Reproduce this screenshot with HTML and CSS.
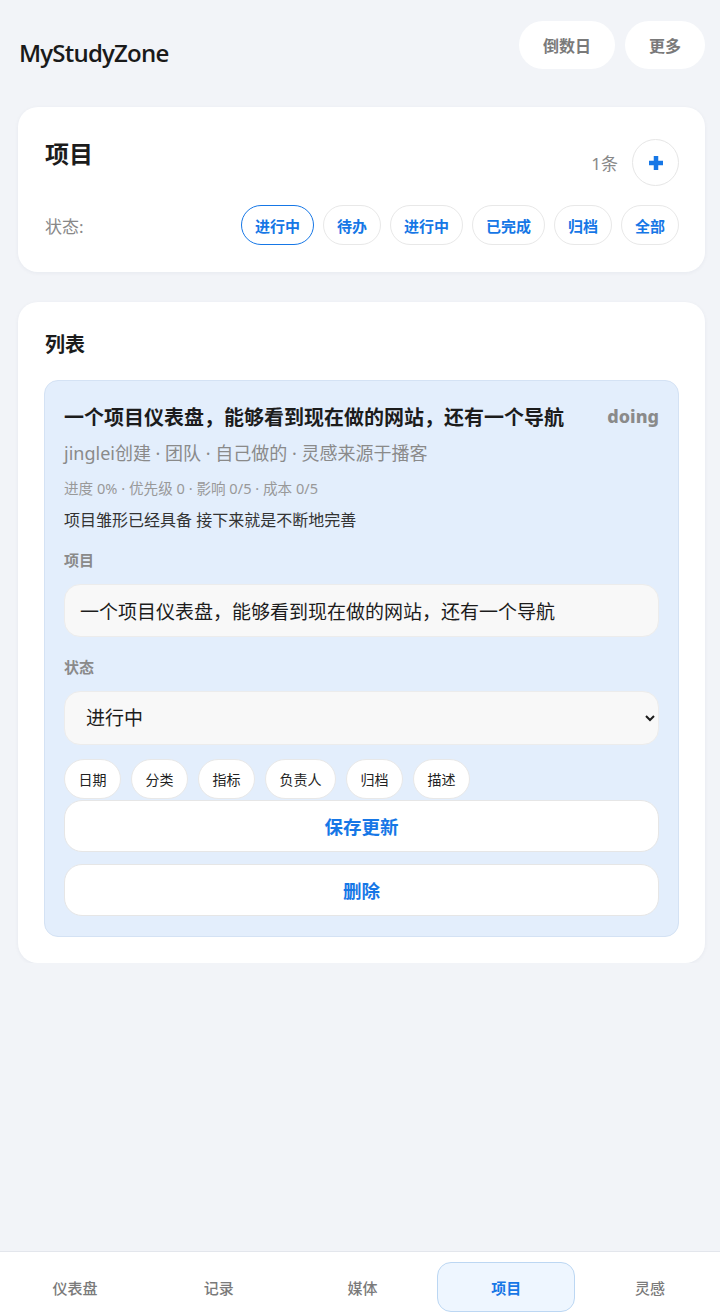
FILE: index.html
```html
<!DOCTYPE html>
<html lang="zh-CN">
<head>
  <meta charset="UTF-8">
  <title>MyStudyZone - 项目</title>
  <link rel="stylesheet" href="styles.css">
</head>
<body>
  <div class="page">
    <!-- 顶栏 -->
    <header class="topbar">
      <div class="brand">MyStudyZone</div>
      <div class="top-actions">
        <button class="pill-btn">倒数日</button>
        <button class="pill-btn">更多</button>
      </div>
    </header>

    <!-- 项目筛选 -->
    <section class="card">
      <div class="card-head">
        <h1 class="card-title">项目</h1>
        <div class="head-right">
          <span class="count">1条</span>
          <button class="add-btn" aria-label="新增">
            <svg width="18" height="18" viewBox="0 0 18 18"><path d="M9 2v14M2 9h14" stroke="#1677e6" stroke-width="4.5"/></svg>
          </button>
        </div>
      </div>
      <div class="filter-row">
        <span class="filter-label">状态:</span>
        <div class="chips">
          <button class="chip active">进行中</button>
          <button class="chip">待办</button>
          <button class="chip">进行中</button>
          <button class="chip">已完成</button>
          <button class="chip">归档</button>
          <button class="chip">全部</button>
        </div>
      </div>
    </section>

    <!-- 列表 -->
    <section class="card list-card">
      <h2 class="list-title">列表</h2>
      <div class="item">
        <div class="item-head">
          <span class="item-name">一个项目仪表盘，能够看到现在做的网站，还有一个导航</span>
          <span class="item-status">doing</span>
        </div>
        <div class="item-meta">jinglei创建 · 团队 · 自己做的 · 灵感来源于播客</div>
        <div class="item-stats">进度 0% · 优先级 0 · 影响 0/5 · 成本 0/5</div>
        <div class="item-desc">项目雏形已经具备 接下来就是不断地完善</div>

        <label class="field-label">项目</label>
        <input class="field" type="text" value="一个项目仪表盘，能够看到现在做的网站，还有一个导航">

        <label class="field-label">状态</label>
        <select class="field select">
          <option>进行中</option>
          <option>待办</option>
          <option>已完成</option>
          <option>归档</option>
        </select>

        <div class="tags">
          <button class="tag">日期</button>
          <button class="tag">分类</button>
          <button class="tag">指标</button>
          <button class="tag">负责人</button>
          <button class="tag">归档</button>
          <button class="tag">描述</button>
        </div>
        <button class="wide-btn save">保存更新</button>
        <button class="wide-btn">删除</button>
      </div>
    </section>
  </div>

  <!-- 底部导航 -->
  <nav class="tabbar">
    <a class="tab">仪表盘</a>
    <a class="tab">记录</a>
    <a class="tab">媒体</a>
    <a class="tab active">项目</a>
    <a class="tab">灵感</a>
  </nav>
</body>
</html>
```

FILE: styles.css
```css
html, body {
  margin: 0;
  padding: 0;
  background: #f2f4f8;
  font-family: "Noto Sans", "Noto Sans CJK SC", sans-serif;
  color: #1c1c1c;
}

button, input, select {
  font-family: inherit;
}

.page {
  padding: 21px 15px 0 18px;
}

.topbar {
  display: flex;
  justify-content: space-between;
  align-items: center;
  height: 48px;
}

.brand {
  font-family: "Open Sans", "Noto Sans", sans-serif;
  font-size: 24px;
  font-weight: 600;
  letter-spacing: -0.8px;
  padding-top: 14px;
  padding-left: 1px;
  color: #1a1a1a;
}

.top-actions {
  display: flex;
  gap: 10px;
}

.pill-btn {
  height: 48px;
  padding: 0 24px;
  border: none;
  border-radius: 24px;
  background: #fff;
  color: #7a7a7a;
  font-size: 16px;
  font-weight: 600;
}

.card {
  margin-top: 38px;
  background: #fff;
  border-radius: 20px;
  padding: 26px 26px 27px 27px;
  box-shadow: 0 1px 4px rgba(20, 40, 80, 0.05);
}

.card-head {
  display: flex;
  justify-content: space-between;
  align-items: flex-start;
}

.card-title {
  margin: 0;
  font-size: 24px;
  line-height: 42px;
  font-weight: 700;
}

.head-right {
  display: flex;
  align-items: center;
  gap: 14px;
  margin-top: 6px;
}

.count {
  color: #888;
  font-size: 17px;
}

.add-btn {
  width: 47px;
  height: 47px;
  border-radius: 50%;
  border: 1px solid #e6e6e6;
  background: #fff;
  display: flex;
  align-items: center;
  justify-content: center;
  padding: 0;
}

.filter-row {
  display: flex;
  justify-content: space-between;
  align-items: center;
  margin-top: 19px;
}

.filter-label {
  color: #888;
  font-size: 17px;
}

.chips {
  display: flex;
  gap: 9px;
}

.chip {
  height: 40px;
  padding: 0 13px;
  border: 1px solid #e8e8e8;
  border-radius: 20px;
  background: #fff;
  color: #1677e6;
  font-size: 15px;
  font-weight: 600;
}

.chip.active {
  border-color: #1677e6;
}

.list-card {
  margin-top: 30px;
  padding-bottom: 26px;
}

.list-title {
  margin: 0;
  font-size: 20px;
  line-height: 34px;
  font-weight: 700;
}

.item {
  margin-top: 18px;
  margin-left: -1px;
  background: #e3eefc;
  border: 1px solid #d4e2f4;
  border-radius: 14px;
  padding: 19px 19px 20px 19px;
}

.item-head {
  display: flex;
  justify-content: space-between;
  align-items: center;
  height: 32px;
}

.item-name {
  font-size: 20px;
  font-weight: 700;
}

.item-status {
  font-size: 18px;
  font-weight: 800;
  color: #8a8a8a;
}

.item-meta {
  margin-top: 8px;
  font-size: 18px;
  line-height: 26px;
  color: #8a8a8a;
}

.item-stats {
  margin-top: 12px;
  font-size: 14.6px;
  line-height: 20px;
  color: #999;
}

.item-desc {
  margin-top: 11px;
  font-size: 16px;
  line-height: 22px;
  color: #333;
}

.field-label {
  display: block;
  margin-top: 18px;
  font-size: 15px;
  line-height: 22px;
  font-weight: 700;
  color: #8a8a8a;
}

.field-label + .field {
  margin-top: 13px;
}

.field + .field-label {
  margin-top: 19px;
}

.field {
  display: block;
  box-sizing: border-box;
  width: 100%;
  height: 53px;
  padding: 0 15px;
  border: 1px solid #ececec;
  border-radius: 16px;
  background: #f8f8f8;
  font-size: 19px;
  color: #1c1c1c;
  outline: none;
}

.select {
  height: 54px;
  padding-left: 17px;
}

.tags {
  display: flex;
  gap: 10px;
  margin-top: 14px;
}

.tag {
  height: 40px;
  padding: 0 13.5px;
  border: 1px solid #e8e8e8;
  border-radius: 20px;
  background: #fff;
  color: #222;
  font-size: 14px;
}

.wide-btn {
  display: block;
  width: 100%;
  height: 52px;
  margin-top: 12px;
  border: 1px solid #e6e6e6;
  border-radius: 18px;
  background: #fff;
  color: #1677e6;
  font-size: 18.5px;
  font-weight: 700;
}

.wide-btn.save {
  margin-top: 1px;
}

.tabbar {
  position: fixed;
  left: 0;
  right: 0;
  bottom: 0;
  height: 65px;
  box-sizing: border-box;
  background: #fff;
  border-top: 1px solid #e3e6ec;
  display: grid;
  grid-template-columns: repeat(5, 1fr);
  gap: 6px;
  padding: 10px 1px 4px 6px;
}

.tab {
  display: flex;
  align-items: center;
  justify-content: center;
  border: 1px solid transparent;
  border-radius: 14px;
  color: #7a7a7a;
  font-size: 15px;
  font-weight: 500;
  text-decoration: none;
}

.tab.active {
  background: #eef6ff;
  border-color: #bcd7f3;
  color: #1677e6;
  font-weight: 700;
}
```
